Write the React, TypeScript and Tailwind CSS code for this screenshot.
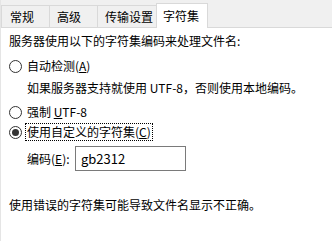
import React from "react";

const font = { fontFamily: '"Noto Sans CJK SC", "Liberation Sans", sans-serif' };

function Radio({ checked }: { checked?: boolean }) {
  return (
    <span className="flex h-[13px] w-[13px] shrink-0 items-center justify-center rounded-full border border-[#333] bg-white">
      {checked && <span className="h-[7px] w-[7px] rounded-full bg-[#333]" />}
    </span>
  );
}

export default function App() {
  return (
    <div className="h-[241px] w-[332px] overflow-hidden bg-white text-[12px] text-black border-l border-[#e5e5e5]" style={font}>
      {/* tab bar */}
      <div className="flex h-[28px] items-end border-b border-[#d9d9d9] bg-[#f0f0f0]">
        <div className="flex h-[22px] w-[48px] items-center border-t border-l border-[#d9d9d9] pl-[8px]">常规</div>
        <div className="flex h-[22px] w-[48px] items-center border-t border-l border-[#d9d9d9] pl-[7px]">高级</div>
        <div className="flex h-[22px] w-[59px] items-center border-t border-l border-[#d9d9d9] pl-[7px]">传输设置</div>
        <div className="mb-[-1px] flex h-[25px] w-[52px] items-center border-x border-t border-[#d9d9d9] bg-white pl-[6px]">字符集</div>
      </div>

      <div className="flex flex-col pl-[8px]">
        <div className="mt-[5px] h-[16px] leading-[16px]">服务器使用以下的字符集编码来处理文件名:</div>

        <div className="mt-[9px] flex h-[16px] items-center gap-[5px] pl-[-1px]">
          <Radio />
          <span className="leading-[16px]">自动检测(<span className="underline">A</span>)</span>
        </div>

        <div className="mt-[6px] h-[16px] pl-[18px] leading-[16px]">如果服务器支持就使用 UTF-8，否则使用本地编码。</div>

        <div className="mt-[8px] flex h-[16px] items-center gap-[5px]">
          <Radio />
          <span className="leading-[16px]">强制 <span className="underline">U</span>TF-8</span>
        </div>

        <div className="mt-[3px] flex h-[18px] items-center gap-[3px]">
          <Radio checked />
          <span className="border border-dotted border-black px-[1px] leading-[16px]">使用自定义的字符集(<span className="underline">C</span>)</span>
        </div>

        <div className="mt-[5px] flex items-center pl-[18px]">
          <span className="w-[48px] leading-[16px]">编码(<span className="underline">E</span>):</span>
          <div className="flex h-[25px] w-[111px] items-center border border-[#7a7a7a] pl-[5px] text-[13px]">gb2312</div>
        </div>

        <div className="mt-[26px] h-[16px] leading-[16px]">使用错误的字符集可能导致文件名显示不正确。</div>
      </div>
    </div>
  );
}
